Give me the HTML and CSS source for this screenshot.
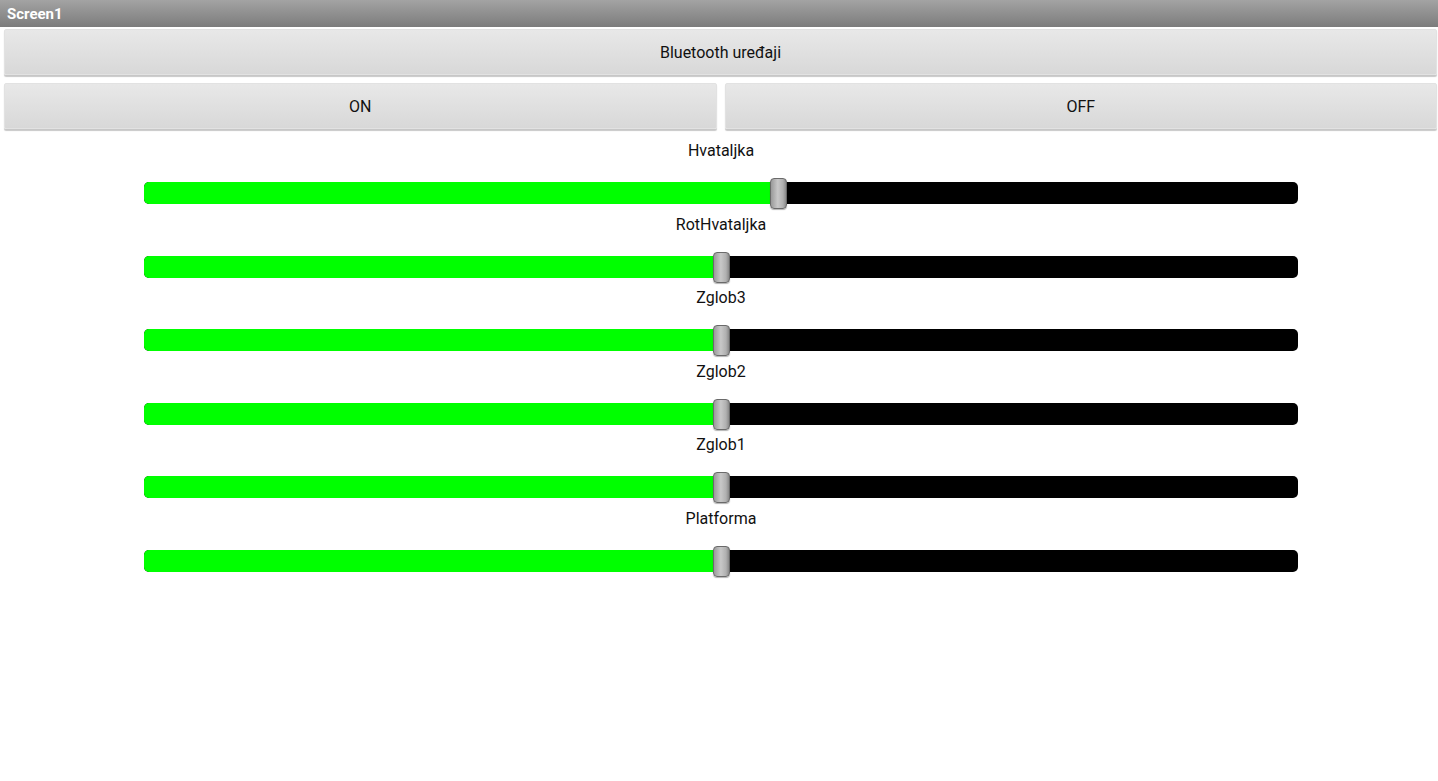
FILE: index.html
```html
<!DOCTYPE html>
<html>
<head>
<meta charset="utf-8">
<link rel="stylesheet" href="styles.css">
</head>
<body>
<div class="titlebar">Screen1</div>
<div class="btnrow first"><div class="btn">Bluetooth uređaji</div></div>
<div class="btnrow second"><div class="btn">ON</div><div class="btn">OFF</div></div>
<div class="sliders">
  <div class="block"><div class="label">Hvataljka</div><div class="slider"><div class="track"><div class="fill" style="width:634px"><div class="thumb"></div></div></div></div></div>
  <div class="block"><div class="label">RotHvataljka</div><div class="slider"><div class="track"><div class="fill" style="width:577px"><div class="thumb"></div></div></div></div></div>
  <div class="block"><div class="label">Zglob3</div><div class="slider"><div class="track"><div class="fill" style="width:577px"><div class="thumb"></div></div></div></div></div>
  <div class="block"><div class="label">Zglob2</div><div class="slider"><div class="track"><div class="fill" style="width:577px"><div class="thumb"></div></div></div></div></div>
  <div class="block"><div class="label">Zglob1</div><div class="slider"><div class="track"><div class="fill" style="width:577px"><div class="thumb"></div></div></div></div></div>
  <div class="block"><div class="label">Platforma</div><div class="slider"><div class="track"><div class="fill" style="width:577px"><div class="thumb"></div></div></div></div></div>
</div>
</body>
</html>
```
FILE: styles.css
```css
html, body { margin: 0; padding: 0; background: #fff; }
body { font-family: Roboto, "Noto Sans", sans-serif; color: #111; width: 1438px; height: 781px; overflow: hidden; }
.titlebar {
  height: 27px;
  background: linear-gradient(#a3a3a3, #7c7c7c);
  color: #fff;
  font-weight: bold;
  font-size: 15px;
  line-height: 29px;
  padding-left: 7px;
  box-sizing: border-box;
}
.btnrow { display: flex; gap: 8px; padding: 0 1px 0 4px; }
.btnrow.first { margin-top: 2px; }
.btnrow.second { margin-top: 8px; }
.btn {
  flex: 1;
  height: 46px;
  box-sizing: border-box;
  padding-top: 1px;
  background: linear-gradient(#e8e8e8, #d8d8d8);
  border: 1px solid #e2e2e2;
  border-radius: 2px;
  box-shadow: 0 2px 1px rgba(0,0,0,0.22);
  display: flex;
  align-items: center;
  justify-content: center;
  font-size: 16px;
  color: #111;
}
.sliders { padding-top: 11px; display: flex; flex-direction: column; }
.block { height: 73.5px; display: flex; flex-direction: column; }
.label { height: 20px; line-height: 20px; padding-top: 1px; text-align: center; font-size: 16px; padding-left: 4px; }
.slider { padding-left: 144px; padding-top: 21px; }
.track {
  width: 1154px;
  height: 22px;
  background: #000;
  border-radius: 5px;
}
.fill {
  position: relative;
  height: 100%;
  background: #00ff00;
  border-radius: 5px 0 0 5px;
}
.thumb {
  position: absolute;
  top: -4px;
  right: -9px;
  width: 17px;
  height: 31px;
  box-sizing: border-box;
  border: 1px solid #6a6a6a;
  border-radius: 4px;
  background: linear-gradient(90deg, #9a9a9a, #c8c8c8 45%, #b0b0b0 80%, #8a8a8a);
  box-shadow: 0 1px 1px rgba(0,0,0,0.3);
}
```
